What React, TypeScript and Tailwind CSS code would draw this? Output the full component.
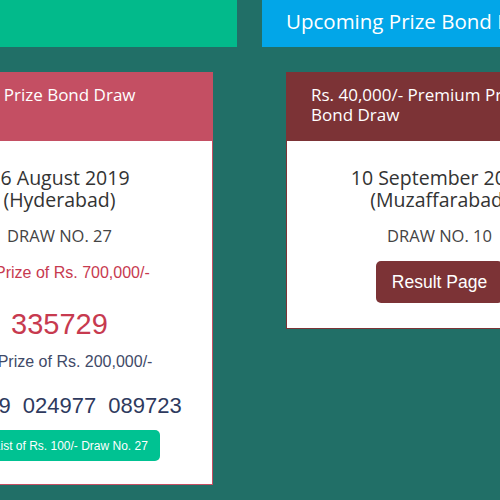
const heading = { fontFamily: "'Open Sans', 'Noto Sans', sans-serif" };
const body = { fontFamily: "'Liberation Sans', Arial, sans-serif" };

const DrawCard = ({
  title,
  date,
  city,
  drawNo,
  headerBg,
  borderColor,
  children,
}: {
  title: string;
  date: string;
  city: string;
  drawNo: string;
  headerBg: string;
  borderColor: string;
  children: React.ReactNode;
}) => (
  <div className={`mx-6 mt-[25px] border bg-white ${borderColor}`}>
    <div
      className={`h-[68px] px-6 pt-[12px] text-[17px] leading-[20px] text-white ${headerBg}`}
      style={heading}
    >
      {title}
    </div>
    <div className="flex flex-col items-center px-4 text-center">
      <div
        className="pt-[26px] text-[19.5px] leading-[22px] font-medium text-[#333]"
        style={heading}
      >
        {date}
        <br />({city})
      </div>
      <div
        className="mt-[15px] text-[16.5px] leading-[20px] text-[#444]"
        style={heading}
      >
        DRAW NO. {drawNo}
      </div>
      {children}
    </div>
  </div>
);

export default function App() {
  return (
    <div className="relative h-[500px] w-[500px] overflow-hidden bg-[#216f67]">
      <div className="-ml-[118px] flex gap-[25px]">
        {/* Latest result */}
        <div className="w-[355px] shrink-0">
          <div className="h-[47px] bg-[#02ba8b]" />
          <DrawCard
            title="Rs. 750/- Prize Bond Draw"
            date="26 August 2019"
            city="Hyderabad"
            drawNo="27"
            headerBg="bg-[#c44f63]"
            borderColor="border-[#c44f63]"
          >
            <div style={body} className="flex flex-col items-center">
              <div className="mt-[17px] text-[16px] leading-[20px] text-[#c73a4f]">
                1st Prize of Rs. 700,000/-
              </div>
              <div className="mt-[24px] text-[29px] leading-[34px] text-[#c73a4f]">
                335729
              </div>
              <div className="mt-[11px] text-[16px] leading-[20px] text-[#3f4a68]">
                2nd Prize of Rs. 200,000/-
              </div>
              <div className="mt-[20px] flex gap-3 text-[22px] leading-[28px] text-[#2e3a5e]">
                <span>476239</span>
                <span>024977</span>
                <span>089723</span>
              </div>
              <button className="mt-[10px] mb-[23px] h-[31px] rounded-[5px] bg-[#00c292] px-3 text-[12px] text-white">
                Full List of Rs. 100/- Draw No. 27
              </button>
            </div>
          </DrawCard>
        </div>

        {/* Upcoming */}
        <div className="w-[355px] shrink-0">
          <div
            className="h-[47px] bg-[#02a6e8] pl-6 pt-[8px] text-[20.5px] leading-[26px] text-white"
            style={heading}
          >
            Upcoming Prize Bond Draws
          </div>
          <DrawCard
            title="Rs. 40,000/- Premium Prize Bond Draw"
            date="10 September 2019"
            city="Muzaffarabad"
            drawNo="10"
            headerBg="bg-[#7c3336]"
            borderColor="border-[#7c3336]"
          >
            <button
              style={body}
              className="mt-[15px] mb-[25px] h-[42px] rounded-[5px] bg-[#7c3336] px-4 text-[17.5px] text-white"
            >
              Result Page
            </button>
          </DrawCard>
        </div>
      </div>
    </div>
  );
}
